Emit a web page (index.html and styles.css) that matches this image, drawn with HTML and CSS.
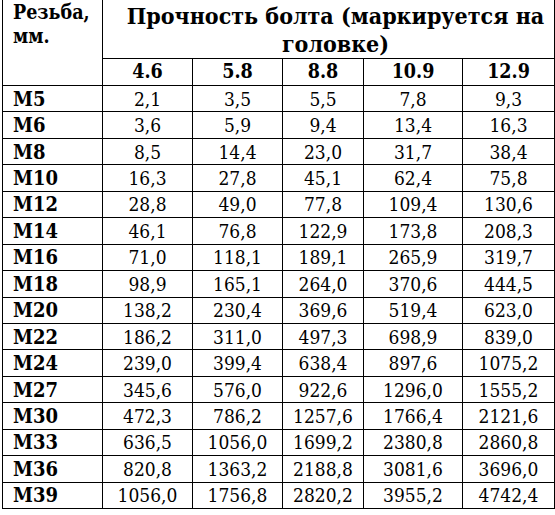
FILE: index.html
```html
<!DOCTYPE html>
<html lang="ru">
<head>
<meta charset="utf-8">
<title>Прочность болтов</title>
<link rel="stylesheet" href="styles.css">
</head>
<body>
<table class="bolts">
  <colgroup>
    <col class="c0"><col class="c1"><col class="c2"><col class="c3"><col class="c4"><col class="c5">
  </colgroup>
  <thead>
    <tr class="h1">
      <th rowspan="2" class="thread">Резьба,<br>мм.</th>
      <th colspan="5" class="title">Прочность болта (маркируется на головке)</th>
    </tr>
    <tr class="h2">
      <th>4.6</th><th>5.8</th><th>8.8</th><th>10.9</th><th>12.9</th>
    </tr>
  </thead>
  <tbody>
    <tr><th>M5</th><td>2,1</td><td>3,5</td><td>5,5</td><td>7,8</td><td>9,3</td></tr>
    <tr><th>M6</th><td>3,6</td><td>5,9</td><td>9,4</td><td>13,4</td><td>16,3</td></tr>
    <tr><th>M8</th><td>8,5</td><td>14,4</td><td>23,0</td><td>31,7</td><td>38,4</td></tr>
    <tr><th>M10</th><td>16,3</td><td>27,8</td><td>45,1</td><td>62,4</td><td>75,8</td></tr>
    <tr><th>M12</th><td>28,8</td><td>49,0</td><td>77,8</td><td>109,4</td><td>130,6</td></tr>
    <tr><th>M14</th><td>46,1</td><td>76,8</td><td>122,9</td><td>173,8</td><td>208,3</td></tr>
    <tr><th>M16</th><td>71,0</td><td>118,1</td><td>189,1</td><td>265,9</td><td>319,7</td></tr>
    <tr><th>M18</th><td>98,9</td><td>165,1</td><td>264,0</td><td>370,6</td><td>444,5</td></tr>
    <tr><th>M20</th><td>138,2</td><td>230,4</td><td>369,6</td><td>519,4</td><td>623,0</td></tr>
    <tr><th>M22</th><td>186,2</td><td>311,0</td><td>497,3</td><td>698,9</td><td>839,0</td></tr>
    <tr><th>M24</th><td>239,0</td><td>399,4</td><td>638,4</td><td>897,6</td><td>1075,2</td></tr>
    <tr><th>M27</th><td>345,6</td><td>576,0</td><td>922,6</td><td>1296,0</td><td>1555,2</td></tr>
    <tr><th>M30</th><td>472,3</td><td>786,2</td><td>1257,6</td><td>1766,4</td><td>2121,6</td></tr>
    <tr><th>M33</th><td>636,5</td><td>1056,0</td><td>1699,2</td><td>2380,8</td><td>2860,8</td></tr>
    <tr><th>M36</th><td>820,8</td><td>1363,2</td><td>2188,8</td><td>3081,6</td><td>3696,0</td></tr>
    <tr><th>M39</th><td>1056,0</td><td>1756,8</td><td>2820,2</td><td>3955,2</td><td>4742,4</td></tr>
  </tbody>
</table>
</body>
</html>
```
FILE: styles.css
```css
html, body {
  margin: 0;
  padding: 0;
  background: #ffffff;
}
body {
  padding-left: 2px;
  color: #000;
  font-family: "DejaVu Serif Condensed", "DejaVu Serif", serif;
  font-stretch: condensed;
}
.bolts {
  table-layout: fixed;
  width: 552px;
  border-collapse: collapse;
  border-spacing: 0;
}
.c0 { width: 100px; }
.c1 { width: 90px; }
.c2 { width: 90px; }
.c3 { width: 81px; }
.c4 { width: 99px; }
.c5 { width: 92px; }

.bolts th,
.bolts td {
  font-family: "DejaVu Serif Condensed", "DejaVu Serif", serif;
  font-stretch: condensed;
  border: 1px solid #000;
  padding: 0;
  text-align: center;
  vertical-align: middle;
  font-size: 19px;
  line-height: 24px;
}
.bolts tr.h1 th { border-top: none; }
.bolts .h1 { height: 58px; }
.bolts .h2 { height: 27px; }
.bolts .h2 th {
  font-weight: bold;
  font-size: 19.5px;
}
.bolts tbody tr { height: 26.44px; }
.bolts tbody th {
  text-align: left;
  padding-left: 10px;
  font-weight: bold;
  font-size: 20px;
}
.bolts td { font-weight: normal; }
.bolts .thread {
  text-align: left;
  vertical-align: top;
  padding: 1px 0 0 10px;
  font-size: 19.5px;
  line-height: 24px;
}
.bolts .title {
  font-size: 23px;
  line-height: 28px;
  padding: 2px 4px 0 18px;
}
```
